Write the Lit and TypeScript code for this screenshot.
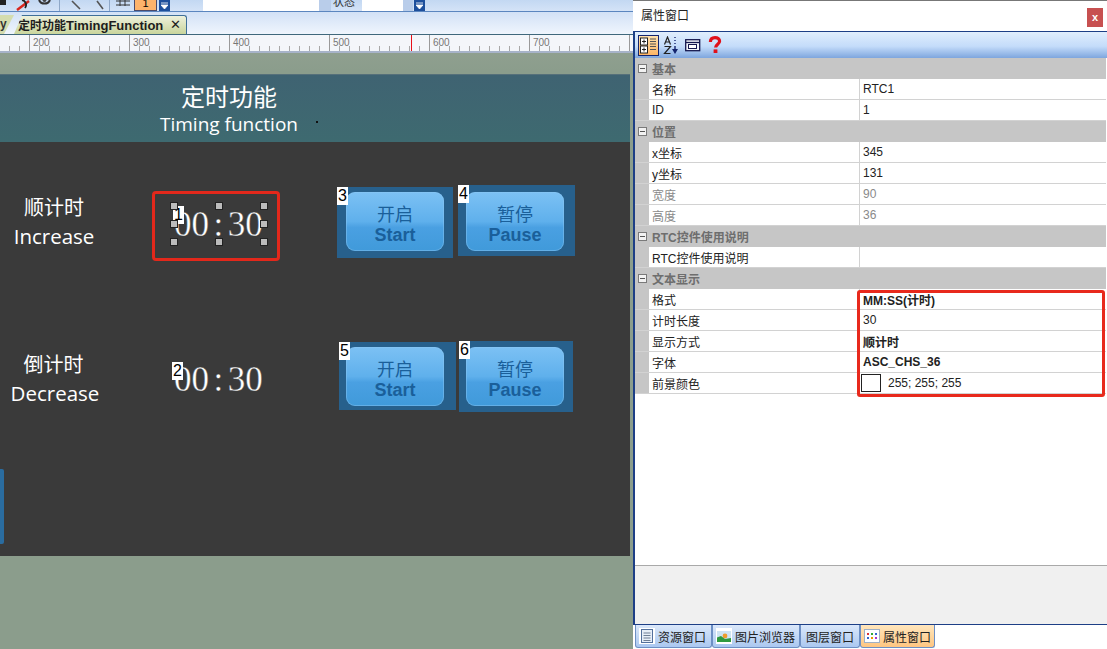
import { LitElement, css, html, svg } from "lit";
import { customElement } from "lit/decorators.js";

type Row = { name: string; value?: string; bold?: boolean; dim?: boolean; swatch?: boolean };
type Group = { title: string; rows: Row[] };

const groups: Group[] = [
  {
    title: "基本",
    rows: [
      { name: "名称", value: "RTC1" },
      { name: "ID", value: "1" },
    ],
  },
  {
    title: "位置",
    rows: [
      { name: "x坐标", value: "345" },
      { name: "y坐标", value: "131" },
      { name: "宽度", value: "90", dim: true },
      { name: "高度", value: "36", dim: true },
    ],
  },
  {
    title: "RTC控件使用说明",
    rows: [{ name: "RTC控件使用说明" }],
  },
  {
    title: "文本显示",
    rows: [
      { name: "格式", value: "MM:SS(计时)", bold: true },
      { name: "计时长度", value: "30" },
      { name: "显示方式", value: "顺计时", bold: true },
      { name: "字体", value: "ASC_CHS_36", bold: true },
      { name: "前景颜色", value: "255; 255; 255", swatch: true },
    ],
  },
];

@customElement("prop-panel")
export class PropPanel extends LitElement {
  static styles = css`
    :host {
      display: flex;
      flex-direction: column;
      position: relative;
      height: 649px;
      background: #fff;
      font-family: "Liberation Sans", "Noto Sans CJK SC", sans-serif;
      font-size: 12px;
      color: #222;
    }
    .title {
      height: 30px;
      flex: none;
      border-top: 1px solid #777;
      display: flex;
      align-items: center;
      justify-content: space-between;
      padding: 0 4px 0 8px;
      font-size: 12px;
    }
    .title .text {
      margin-top: -3px;
    }
    .close {
      width: 16px;
      height: 19px;
      margin-top: 2px;
      background: #c75050;
      color: #fff;
      font-weight: bold;
      font-size: 11px;
      display: flex;
      align-items: center;
      justify-content: center;
    }
    .frame {
      flex: 1;
      display: flex;
      flex-direction: column;
      min-height: 0;
      border: 1px solid #1d3f86;
      border-right: none;
      border-left-width: 2px;
    }
    .tools {
      height: 26px;
      flex: none;
      display: flex;
      align-items: center;
      padding-left: 3px;
      background: linear-gradient(#e0eefd, #c4dcfa 55%, #7ea6de);
    }
    .tool {
      width: 21px;
      height: 21px;
      display: flex;
      align-items: center;
      justify-content: center;
      box-sizing: border-box;
    }
    .tool.on {
      border: 1px solid #14246e;
      background: linear-gradient(#ffe2ae, #fdb565);
    }
    .tool.az {
      width: 16px;
      margin-left: 4px;
    }
    .tool.page {
      width: 16px;
      margin-left: 6px;
    }
    .tool.help {
      width: 14px;
      margin-left: 7px;
    }
    .grid {
      flex: 1;
      min-height: 0;
      padding-right: 1px;
      border-bottom: 1px solid #a9a9a9;
    }
    .group {
      height: 21px;
      background: #c6c6c6;
      display: flex;
      align-items: center;
      color: #6e6e6e;
      font-weight: bold;
      padding-left: 3px;
    }
    .pm {
      width: 7px;
      height: 7px;
      border: 1px solid #7a7a7a;
      background: #f2f2f2;
      margin-right: 5px;
      position: relative;
    }
    .pm::after {
      content: "";
      position: absolute;
      left: 1px;
      right: 1px;
      top: 3px;
      height: 1px;
      background: #555;
    }
    .row {
      height: 21px;
      box-sizing: border-box;
      display: grid;
      grid-template-columns: 225px 1fr;
      border-bottom: 1px solid #d2d2d2;
      background: linear-gradient(90deg, #c6c6c6 14px, #fff 14px);
    }
    .row > div {
      display: flex;
      align-items: center;
    }
    .name {
      padding-left: 17px;
      border-right: 1px solid #d2d2d2;
    }
    .value {
      padding-left: 3px;
    }
    .dim {
      color: #8a8a8a;
    }
    .bold {
      font-weight: bold;
    }
    .swatch {
      width: 18px;
      height: 16px;
      border: 1px solid #222;
      background: #fff;
      margin-right: 7px;
      margin-left: -2px;
    }
    .mark {
      position: absolute;
      left: 224px;
      top: 290px;
      width: 242px;
      height: 101px;
      border: 3px solid #e8291c;
      border-radius: 3px;
      pointer-events: none;
    }
    .info {
      height: 58px;
      flex: none;
      background: #f0f0f0;
    }
    .tabs {
      height: 23px;
      flex: none;
      display: flex;
      padding-left: 2px;
      padding-bottom: 1px;
    }
    .tab {
      display: flex;
      align-items: center;
      gap: 3px;
      padding: 0 3px;
      box-sizing: border-box;
      border: 1px solid #6d8fc4;
      border-top: none;
      border-radius: 0 0 3px 3px;
      background: linear-gradient(#dbe8fa, #abc8f0);
      color: #222;
      font-size: 12px;
    }
    .tab.on {
      background: linear-gradient(#ffe6bd, #ffc681);
    }
    .tab.res {
      width: 77px;
    }
    .tab.pics {
      width: 88px;
    }
    .tab.layer {
      width: 60px;
      padding-left: 5px;
    }
    .tab.prop {
      width: 75px;
    }
  `;

  private icon(kind: string) {
    if (kind === "doc")
      return html`<svg width="16" height="16" viewBox="0 0 16 16">
        <rect width="16" height="16" fill="#fff" />
        <rect x="2.5" y="1.5" width="11" height="13" fill="#e6eef8" stroke="#53709c" />
        <path d="M4.5 5h7M4.5 7.5h7M4.5 10h7M4.5 12.5h7" stroke="#6f7f95" />
      </svg>`;
    if (kind === "pic")
      return html`<svg width="16" height="16" viewBox="0 0 16 16">
        <rect width="16" height="16" fill="#fff" />
        <rect x="1" y="3" width="14" height="11" fill="#cfe3f2" />
        <circle cx="9" cy="8" r="2.4" fill="#ef9c2c" />
        <path d="M1 14V9.5L5 8l4 3 6-1v4z" fill="#2f9a3f" />
      </svg>`;
    return html`<svg width="16" height="16" viewBox="0 0 16 16">
      <rect x=".5" y="1.5" width="15" height="13" fill="#fff" stroke="#9fb0c6" />
      <path d="M3 5h2v2H3z" fill="#d33" /><path d="M7 5h2v2H7z" fill="#3a3" /><path d="M11 5h2v2h-2z" fill="#36c" />
      <path d="M3 9h2v2H3z" fill="#36c" /><path d="M7 9h2v2H7z" fill="#e90" /><path d="M11 9h2v2h-2z" fill="#a3c" />
    </svg>`;
  }

  render() {
    return html`
      <div class="title"><span class="text">属性窗口</span><span class="close">x</span></div>
      <div class="frame">
        <div class="tools">
          <div class="tool on">
            <svg width="17" height="17" viewBox="0 0 17 17">
              <rect x=".5" y="1" width="7" height="7" fill="#fff" stroke="#222" />
              <path d="M2 4.5h4M4 2.5v4" stroke="#222" />
              <rect x=".5" y="9" width="7" height="7" fill="#fff" stroke="#222" />
              <path d="M2 12.5h4M4 10.5v4" stroke="#222" />
              <path d="M10 2h6M10 4.5h6M10 7h6M10 9.5h6M10 12.5h6" stroke="#555" />
            </svg>
          </div>
          <div class="tool az">
            <svg width="16" height="19" viewBox="0 0 16 19">
              <path d="M1.5 8.5 4.5 1l3 7.5M2.6 6h3.8" fill="none" stroke="#222" stroke-width="1.2" />
              <path d="M1.5 10.5h6l-6 7h6" fill="none" stroke="#222" stroke-width="1.2" />
              <path d="M12 1v1M12 4v1M12 7v1M12 10v5" stroke="#14246e" stroke-width="1.4" />
              <path d="M9 13h6l-3 5z" fill="#14246e" />
            </svg>
          </div>
          <div class="tool page">
            <svg width="16" height="14" viewBox="0 0 16 14">
              <rect x=".7" y="1.7" width="14" height="11" fill="#f3f6fb" stroke="#14184e" stroke-width="1.3" />
              <path d="M.7 4.5h14" stroke="#14184e" stroke-width="1.3" />
              <rect x="3.5" y="6.5" width="8" height="4" fill="#fff" stroke="#14184e" />
            </svg>
          </div>
          <div class="tool help">
            <svg width="14" height="18" viewBox="0 0 14 18">
              <path d="M2.4 6C2.4 3 4.4 1.6 7 1.6s4.6 1.4 4.6 3.6c0 3-4 3-4 6.4" fill="none" stroke="#e0101a" stroke-width="3.2" />
              <rect x="5.6" y="13.4" width="3.8" height="3.6" fill="#e0101a" />
            </svg>
          </div>
        </div>
        <div class="grid">
          ${groups.map(
            (g) => html`
              <div class="group"><span class="pm"></span>${g.title}</div>
              ${g.rows.map(
                (r) => html`
                  <div class="row">
                    <div class="name ${r.dim ? "dim" : ""}">${r.name}</div>
                    <div class="value ${r.dim ? "dim" : ""} ${r.bold ? "bold" : ""}">
                      ${r.swatch ? html`<span class="swatch"></span>` : ""}${r.value ?? ""}
                    </div>
                  </div>
                `
              )}
            `
          )}
        </div>
        <div class="info"></div>
      </div>
      <div class="tabs">
        <div class="tab res">${this.icon("doc")}资源窗口</div>
        <div class="tab pics">${this.icon("pic")}图片浏览器</div>
        <div class="tab layer">图层窗口</div>
        <div class="tab on prop">${this.icon("grid")}属性窗口</div>
      </div>
      <div class="mark"></div>
    `;
  }
}

const boxes = [
  { n: 3, x: 337, y: 113, w: 116, h: 71, bx: 9, by: 5, cn: "开启", en: "Start" },
  { n: 4, x: 458, y: 111, w: 117, h: 71, bx: 8, by: 7, cn: "暂停", en: "Pause" },
  { n: 5, x: 339, y: 268, w: 117, h: 68, bx: 7, by: 5, cn: "开启", en: "Start" },
  { n: 6, x: 459, y: 267, w: 114, h: 71, bx: 7, by: 6, cn: "暂停", en: "Pause" },
];

const handles = [
  [174, 132],
  [219, 132],
  [264, 132],
  [174, 150],
  [264, 150],
  [174, 168],
  [219, 168],
  [264, 168],
];

@customElement("app-root")
export class AppRoot extends LitElement {
  static styles = css`
    :host {
      display: grid;
      grid-template-columns: 633px 474px;
      width: 1107px;
      height: 649px;
      overflow: hidden;
      font-family: "Liberation Sans", "Noto Sans CJK SC", sans-serif;
      position: relative;
    }
    .left {
      display: flex;
      flex-direction: column;
      height: 649px;
      min-width: 0;
      background: #8b9d8c;
    }
    .toolbar {
      height: 11px;
      flex: none;
      display: flex;
      align-items: flex-end;
      overflow: hidden;
      background: linear-gradient(#c3d8f2, #d4e3f7);
    }
    .iconstrip {
      flex: none;
      display: block;
    }
    .chev {
      width: 11px;
      height: 11px;
      flex: none;
      background: #1d4f9c;
      display: flex;
      align-items: center;
      justify-content: center;
    }
    .orange {
      width: 23px;
      height: 11px;
      flex: none;
      box-sizing: border-box;
      border: 1px solid #4a4a6a;
      border-top: none;
      background: #fdb36b;
      font-size: 11px;
      line-height: 7px;
      text-align: center;
      overflow: hidden;
    }
    .input {
      background: #fff;
      height: 11px;
      flex: none;
    }
    .input.a {
      width: 116px;
      margin-left: 33px;
    }
    .input.b {
      width: 41px;
      margin-left: 7px;
    }
    .spin {
      background: #b9cdea;
      height: 11px;
      flex: none;
    }
    .spin.a {
      width: 12px;
    }
    .spin.b {
      width: 10px;
      margin-right: 1px;
    }
    .orange + .chev {
      margin-left: 2px;
    }
    .state {
      width: 22px;
      flex: none;
      font-size: 11px;
      line-height: 5px;
      height: 11px;
      color: #333;
      overflow: hidden;
      padding-left: 2px;
    }
    .tabbar {
      height: 24px;
      flex: none;
      box-sizing: border-box;
      background: linear-gradient(#d2e1f6, #eff5fd);
      border-top: 1px solid #5b86bf;
      border-bottom: 1px solid #40687c;
      display: flex;
      align-items: flex-end;
    }
    .prev {
      width: 14px;
      height: 19px;
      flex: none;
      background: #d4dcae;
      font-size: 12px;
      font-weight: bold;
      line-height: 19px;
      overflow: hidden;
      text-align: left;
      color: #333;
      clip-path: polygon(0 0, 100% 0, 4px 100%, 0 100%);
    }
    .tab {
      width: 173px;
      height: 19px;
      flex: none;
      box-sizing: border-box;
      padding: 0 5px 1px 4px;
      border-right: 1px solid #3f6f98;
      border-top: 1px solid #3f6f98;
      border-radius: 0 3px 0 0;
      background: linear-gradient(#eef1dc, #c9d59c);
      clip-path: polygon(0 100%, 8px 0, 100% 0, 100% 100%);
      display: flex;
      align-items: center;
      justify-content: space-between;
      font-size: 12px;
      font-weight: bold;
      color: #1d1d1d;
      white-space: nowrap;
    }
    .tab .lat {
      font-size: 13px;
    }
    .x {
      font-size: 13px;
      font-weight: normal;
      line-height: 15px;
    }
    .ruler {
      height: 18px;
      flex: none;
      background: #f4f6fa;
      border-bottom: 2px solid #a7b3c9;
      box-sizing: border-box;
    }
    .ruler svg {
      display: block;
    }
    .canvas {
      flex: 1;
      padding-top: 21px;
      background: linear-gradient(#8f9f8f, #8b9d8c 18px);
    }
    .device {
      width: 630px;
      height: 482px;
      background: #3a3a3a;
      position: relative;
      color: #fff;
    }
    .head {
      height: 68px;
      box-sizing: border-box;
      border-top: 1px solid #56707a;
      background: linear-gradient(#3f6372, #3e6a70);
      display: flex;
      flex-direction: column;
      align-items: center;
      padding: 4px 172px 0 0;
    }
    .head .cn {
      font-size: 24px;
      line-height: 33px;
      font-family: "Noto Sans CJK SC", sans-serif;
    }
    .head .en {
      font-size: 19px;
      line-height: 24px;
      font-family: "Open Sans", sans-serif;
    }
    .speck {
      position: absolute;
      left: 316px;
      top: 47px;
      width: 2px;
      height: 2px;
      background: #111;
    }
    .label {
      position: absolute;
      width: 110px;
      text-align: center;
      font-family: "Open Sans", "Noto Sans CJK SC", sans-serif;
    }
    .label .cn {
      font-size: 20px;
      line-height: 29px;
      font-family: "Noto Sans CJK SC", sans-serif;
      display: block;
    }
    .label.down .cn {
      margin-right: 3px;
    }
    .label .en {
      font-size: 20.5px;
      line-height: 30px;
      display: block;
    }
    .timer {
      position: absolute;
      font-family: "Liberation Serif", serif;
      font-size: 35px;
      line-height: 40px;
      white-space: nowrap;
      color: #fff;
      -webkit-text-stroke: 0.35px #3a3a3a;
    }
    .timer i {
      font-style: normal;
      margin: 0 4.5px;
    }
    .tag {
      position: absolute;
      background: #fff;
      color: #000;
      font-size: 16px;
      line-height: 18px;
      width: 11px;
      height: 18px;
      text-align: center;
    }
    .handle {
      position: absolute;
      width: 8px;
      height: 8px;
      box-sizing: border-box;
      background: #bcbcbc;
      border: 1px solid #222;
      transform: translate(-50%, -50%);
    }
    .redbox {
      position: absolute;
      left: 152px;
      top: 117px;
      width: 128px;
      height: 70px;
      box-sizing: border-box;
      border: 3px solid #e3281b;
      border-radius: 4px;
    }
    .btnbox {
      position: absolute;
      background: #27608c;
    }
    .btn {
      position: absolute;
      width: 98px;
      height: 59px;
      border-radius: 9px;
      box-shadow: inset 0 0 0 1px rgba(140, 200, 245, 0.45);
      background: linear-gradient(#7cc1f4, #5fb0ec 50%, #4aa0e2 60%, #409ada);
      display: flex;
      flex-direction: column;
      align-items: center;
      justify-content: center;
      color: #1a5f9a;
      padding-top: 4px;
      box-sizing: border-box;
    }
    .btn .cn {
      font-size: 18px;
      line-height: 23px;
      font-family: "Noto Sans CJK SC", sans-serif;
      margin-top: -1px;
    }
    .btn .en {
      font-size: 18px;
      line-height: 20px;
      font-weight: bold;
    }
    .sliver {
      position: absolute;
      left: 0;
      top: 395px;
      width: 4px;
      height: 75px;
      background: #2a6c9f;
      border-radius: 0 2px 2px 0;
    }
  `;

  private ruler() {
    const ticks = [];
    for (let x = 9; x < 633; x += 10) {
      const major = (x - 29) % 100 === 0;
      ticks.push(
        svg`<line x1=${x + 0.5} x2=${x + 0.5} y1=${major ? 0 : 11} y2="16" stroke=${major ? "#9a9a9a" : "#a8a8a8"} />`
      );
    }
    const labels = [200, 300, 400, 500, 600, 700];
    return html`<svg width="633" height="16" viewBox="0 0 633 16">
      ${ticks}
      ${labels.map(
        (v, i) => svg`<text x=${33 + i * 100} y="11" font-size="10" fill="#777" font-family="Liberation Sans">${v}</text>`
      )}
      <rect x="411" y="0" width="1" height="16" fill="#e8101a" />
    </svg>`;
  }

  private chev() {
    return html`<div class="chev">
      <svg width="7" height="8" viewBox="0 0 7 8">
        <path d="M0 1h7M0 3h7l-3.5 4z" stroke="#fff" fill="#fff" stroke-width=".8" />
      </svg>
    </div>`;
  }

  render() {
    return html`
      <div class="left">
        <div class="toolbar">
          <svg class="iconstrip" width="134" height="11" viewBox="0 0 134 11">
            <rect x="0" y="0" width="6" height="5" fill="#222" />
            <path d="M17 10 29 1" stroke="#d8261e" stroke-width="2.4" />
            <path d="M22 0a5 5 0 0 1 3 8" fill="none" stroke="#222" stroke-width="1.8" />
            <path d="M39 0a6 6 0 0 0 11 0" fill="none" stroke="#333" stroke-width="2" />
            <circle cx="44.5" cy="0" r="2" fill="#444" />
            <path d="M59.5 0v11M109.5 0v11" stroke="#8fa8c8" />
            <path d="M72 1 80 9M97 1l6 8" stroke="#555" stroke-width="1.6" />
            <path d="M116 1h14M116 5h14M120 0v6M125 0v6" stroke="#333" />
          </svg>
          <div class="orange">1</div>
          ${this.chev()}
          <div class="input a"></div>
          <div class="spin a"></div>
          <div class="state">状态</div>
          <div class="input b"></div>
          <div class="spin b"></div>
          ${this.chev()}
        </div>
        <div class="tabbar">
          <div class="prev">y</div>
          <div class="tab">
            <span>定时功能<span class="lat">TimingFunction</span></span><span class="x">✕</span>
          </div>
        </div>
        <div class="ruler">${this.ruler()}</div>
        <div class="canvas">
          <div class="device">
            <div class="head">
              <div class="cn">定时功能</div>
              <div class="en">Timing function</div>
            </div>
            <div class="speck"></div>
            <div class="label" style="left:-1px;top:118px">
              <span class="cn">顺计时</span><span class="en">Increase</span>
            </div>
            <div class="label down" style="left:0;top:275px">
              <span class="cn">倒计时</span><span class="en">Decrease</span>
            </div>
            <div class="timer" style="left:174px;top:131px">00<i>:</i>30</div>
            <div class="timer" style="left:174px;top:286px">00<i>:</i>30</div>
            <div class="redbox"></div>
            ${boxes.map(
              (b) => html`
                <div class="btnbox" style="left:${b.x}px;top:${b.y}px;width:${b.w}px;height:${b.h}px">
                  <div class="btn" style="left:${b.bx}px;top:${b.by}px">
                    <span class="cn">${b.cn}</span><span class="en">${b.en}</span>
                  </div>
                  <div class="tag" style="left:0;top:0">${b.n}</div>
                </div>
              `
            )}
            <div class="tag" style="left:173px;top:132px">1</div>
            <div class="tag" style="left:172px;top:288px">2</div>
            ${handles.map(([x, y]) => html`<div class="handle" style="left:${x}px;top:${y}px"></div>`)}
            <div class="sliver"></div>
          </div>
        </div>
      </div>
      <prop-panel></prop-panel>
    `;
  }
}
